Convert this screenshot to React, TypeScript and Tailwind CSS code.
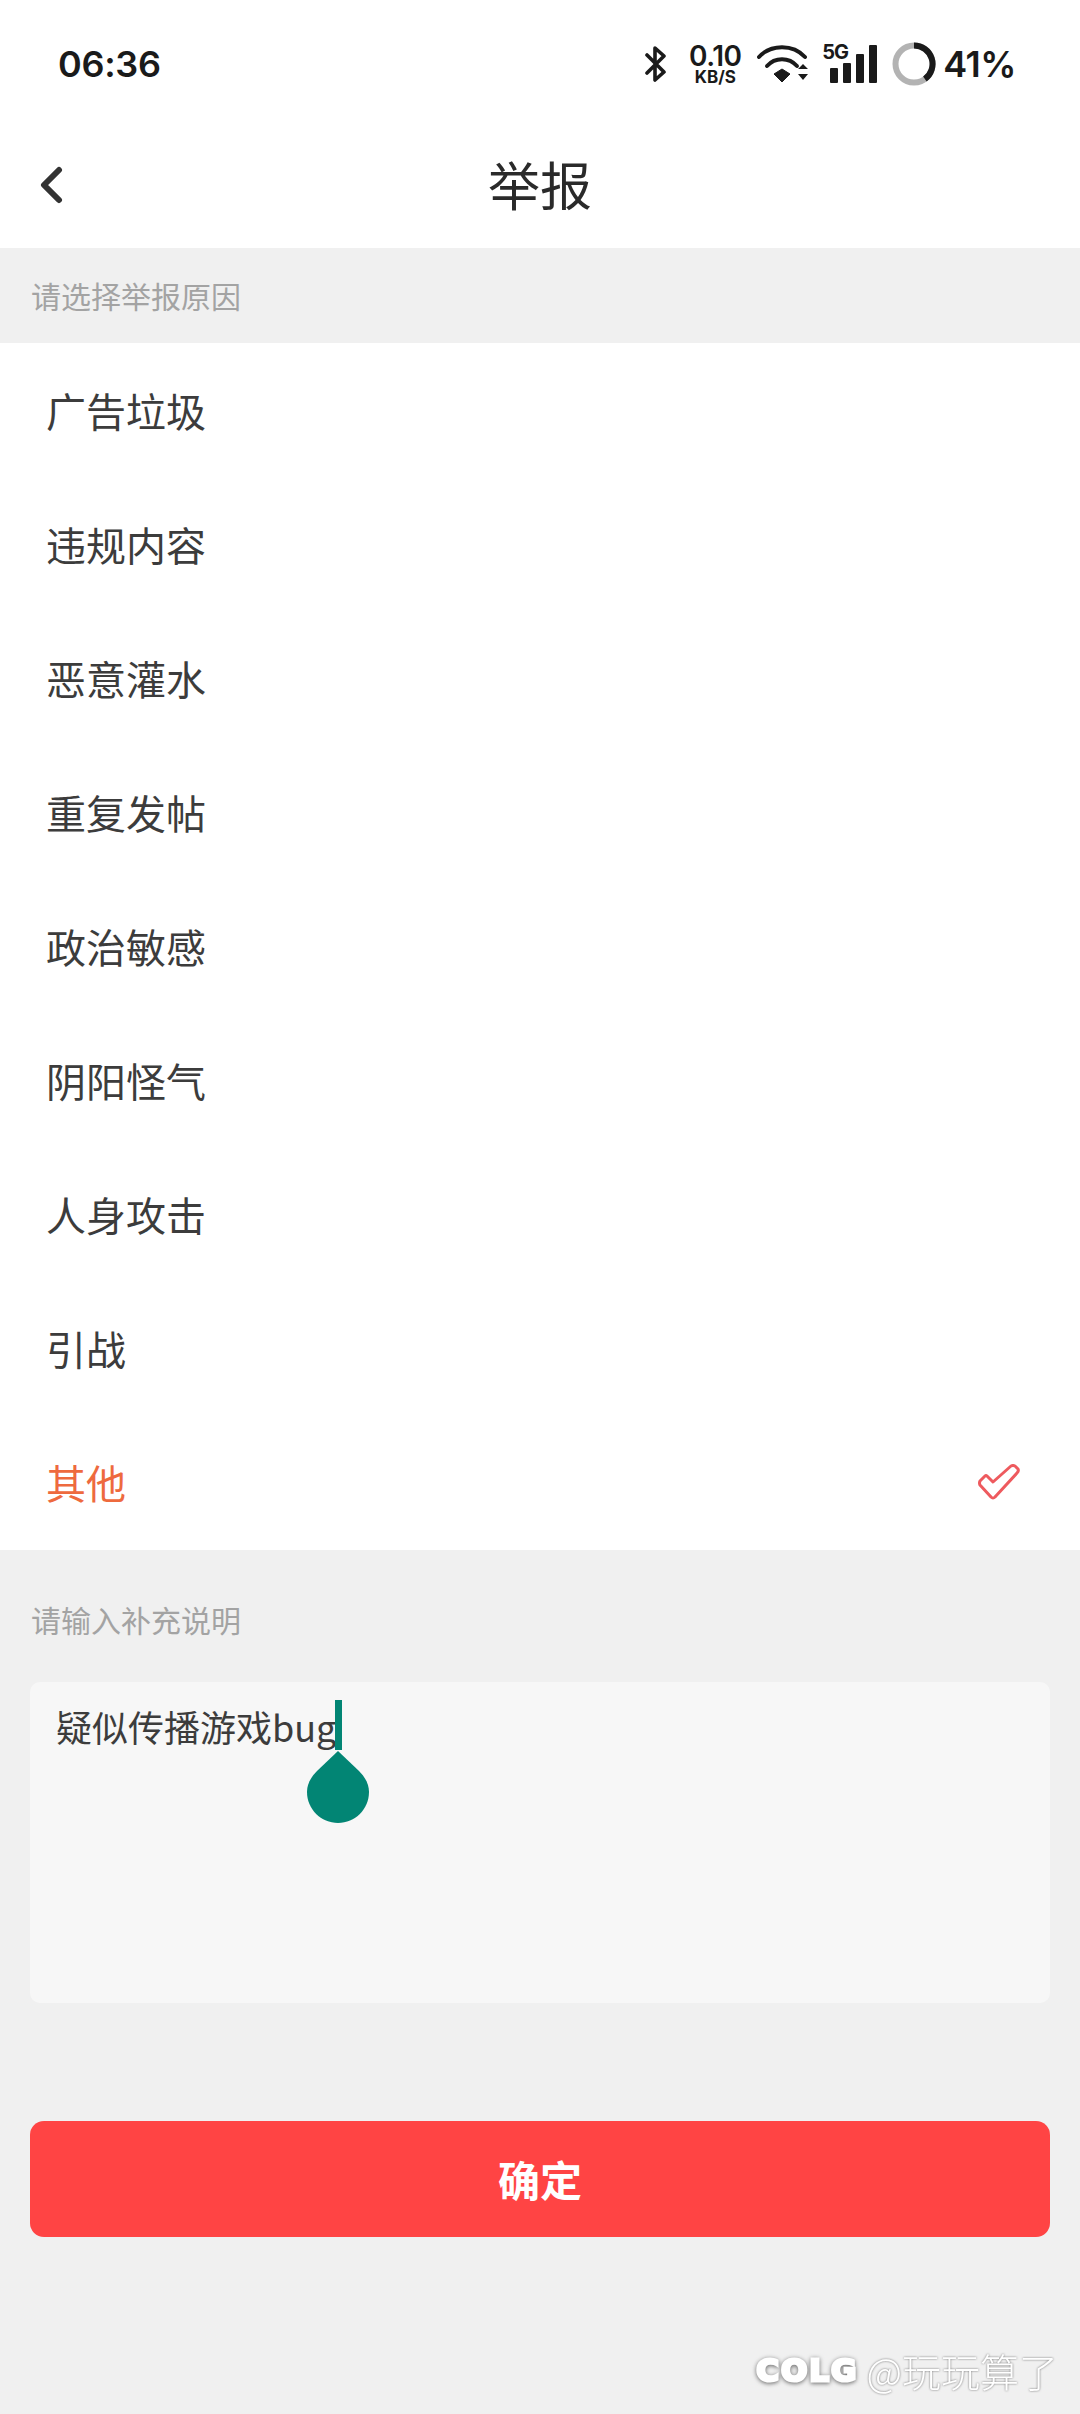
const CJK = 'font-["Noto_Sans_CJK_SC",sans-serif]';

const reasons = ['广告垃圾', '违规内容', '恶意灌水', '重复发帖', '政治敏感', '阴阳怪气', '人身攻击', '引战', '其他'];

function StatusIcons() {
  return (
    <div className="flex items-center font-['Inter',sans-serif] text-[#1a1a1a]">
      <svg width="22" height="38" viewBox="0 0 22 38" fill="none" stroke="#1a1a1a" strokeWidth="3.6" strokeLinejoin="round" strokeLinecap="round">
        <path d="M2 10 L19 27 L10 35 L10 3 L19 11 L2 28" />
      </svg>
      <div className="ml-[20px] flex w-[56px] flex-col items-center">
        <span className="text-[28px] leading-[23px] font-semibold tracking-[-0.5px]">0.10</span>
        <span className="mt-[2px] text-[17px] leading-[14px] font-bold">KB/S</span>
      </div>
      <svg className="ml-[14px]" width="52" height="38" viewBox="0 0 52 38" fill="none">
        <path d="M2 12 C14 -1 36 -1 48 12" stroke="#1a1a1a" strokeWidth="4" strokeLinecap="round" />
        <path d="M10 21 C18 12 32 12 40 21" stroke="#1a1a1a" strokeWidth="4" strokeLinecap="round" />
        <path d="M17 29 L25 24 L33 29 L25 37 Z" fill="#1a1a1a" stroke="#1a1a1a" strokeWidth="1" strokeLinejoin="round" />
        <path d="M41 24 L46 19 L51 24 Z M41 29 L51 29 L46 35 Z" fill="#1a1a1a" />
      </svg>
      <div className="relative ml-[14px] h-[38px] w-[54px]">
        <span className="absolute top-[-3px] left-[-1px] text-[20px] leading-[20px] font-bold tracking-[-1px]">5G</span>
        <svg className="absolute top-0 left-0" width="54" height="38" viewBox="0 0 54 38" fill="#1a1a1a">
          <rect x="7" y="23" width="8" height="15" rx="1" />
          <rect x="20" y="18" width="8" height="20" rx="1" />
          <rect x="33" y="9" width="8" height="29" rx="1" />
          <rect x="46" y="0" width="8" height="38" rx="1" />
        </svg>
      </div>
      <svg className="ml-[15px]" width="44" height="44" viewBox="0 0 44 44" fill="none">
        <circle cx="22" cy="22" r="18.5" stroke="#b3b3b3" strokeWidth="6" />
        <path d="M22 3.5 A18.5 18.5 0 0 1 32.9 37" stroke="#1a1a1a" strokeWidth="6" />
      </svg>
      <span className="ml-[7px] text-[36px] leading-none font-semibold tracking-[-0.5px]">41%</span>
    </div>
  );
}

function ReasonRow({ label, selected }: { label: string; selected: boolean }) {
  return (
    <div className="flex h-[134px] items-center justify-between pr-[60px] pl-[46px]">
      <span className={`text-[40px] leading-none ${selected ? 'text-[#ee6a3e]' : 'text-[#3c3c3c]'}`}>{label}</span>
      {selected && (
        <svg width="42" height="36" viewBox="0 0 42 36" fill="#ffffff" stroke="#ee5a5e" strokeWidth="3" strokeLinejoin="round">
          <path d="M2 17 L7 12 Q8 11 9 12 L15 18 L33 2 Q35 1 37 2 L40 5 Q41 7 39 9 L17 33 Q15 35 13 33 L2 21 Q1 19 2 17 Z" />
        </svg>
      )}
    </div>
  );
}

export default function App() {
  return (
    <div className={`relative flex min-h-[2414px] w-[1080px] flex-col overflow-hidden bg-[#f0f0f0] ${CJK}`}>
      <div className="bg-white">
        <div className="flex h-[128px] items-center justify-between pr-[64px] pl-[58px]">
          <span className="font-['Inter',sans-serif] text-[36px] leading-none font-semibold tracking-[-0.3px] text-[#1a1a1a]">06:36</span>
          <StatusIcons />
        </div>
        <div className="relative flex h-[120px] items-center justify-center">
          <svg className="absolute top-[38px] left-[38px]" width="28" height="38" viewBox="0 0 28 38" fill="none" stroke="#333333" strokeWidth="6" strokeLinecap="round" strokeLinejoin="round">
            <path d="M21 4 L6 19 L21 34" />
          </svg>
          <span className="mb-[8px] text-[52px] leading-none text-[#2a2a2a]">举报</span>
        </div>
      </div>

      <div className="flex h-[95px] items-center pb-[2px] pl-[31px] text-[30px] leading-none text-[#a3a3a3]">请选择举报原因</div>

      <div className="bg-white pb-[1px]">
        {reasons.map(r => (
          <ReasonRow key={r} label={r} selected={r === '其他'} />
        ))}
      </div>

      <div className="pt-[53px] pl-[31px] text-[30px] leading-[32px] text-[#a3a3a3]">请输入补充说明</div>

      <div className="relative mx-[30px] mt-[47px] h-[321px] rounded-[10px] bg-[#f7f7f7] pt-[22px] pl-[26px] text-[36px] leading-[44px] text-[#3c3c3c]">
        <span>疑似传播游戏bug</span>
        <span className="absolute top-[18px] left-[305px] h-[50px] w-[7px] bg-[#028574]" />
        <svg className="absolute top-[69px] left-[277px]" width="62" height="72" viewBox="0 0 62 72" fill="#028574">
          <path d="M31 0 L52 20 C58 26 62 33 62 41 C62 58 48 72 31 72 C14 72 0 58 0 41 C0 33 4 26 10 20 Z" />
        </svg>
      </div>

      <button className="mx-[30px] mt-[118px] flex h-[116px] items-center justify-center rounded-[14px] bg-[#ff4444] text-[42px] leading-none font-bold text-white">
        确定
      </button>

      <div className="absolute top-[2348px] right-[22px] flex items-center text-white">
        <span className="font-['DejaVu_Sans',sans-serif] text-[31px] leading-[44px] font-bold tracking-[2px] [-webkit-text-stroke:3px_#ffffff] [filter:drop-shadow(0_1px_2px_#666666)]">COLG</span>
        <span className="ml-[8px] text-[39px] leading-[44px] font-light [filter:drop-shadow(0_0_1px_#777777)]">@玩玩算了</span>
      </div>
    </div>
  );
}
